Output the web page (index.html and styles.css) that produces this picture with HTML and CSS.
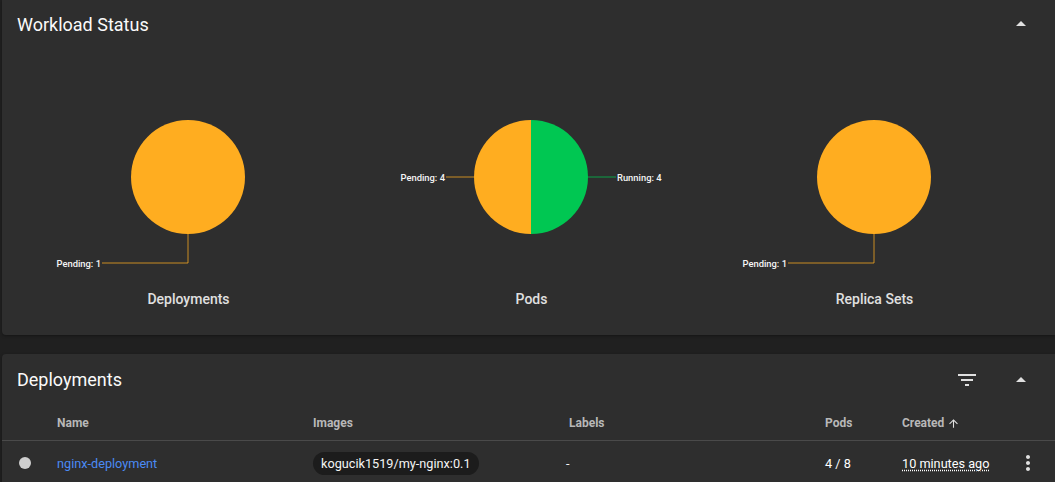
FILE: index.html
```html
<!DOCTYPE html>
<html>
<head>
<meta charset="utf-8">
<link rel="stylesheet" href="styles.css">
</head>
<body>
<section class="card card-top">
  <header class="card-head">
    <h2 class="card-title">Workload Status</h2>
    <div class="head-actions">
      <svg class="icon" viewBox="0 0 24 24"><path d="M7 14l5-5 5 5z" fill="#e0e0e0"/></svg>
    </div>
  </header>
  <div class="charts">
    <div class="chart">
      <svg class="pie" viewBox="0 0 343 200" width="343" height="200">
        <circle cx="171" cy="100" r="57" fill="#ffad20"/>
        <polyline points="171,157 171,186 85,186" fill="none" stroke="#ffad20" stroke-opacity="0.75" stroke-width="1"/>
        <text x="84" y="189.5" text-anchor="end" class="pie-label">Pending: 1</text>
      </svg>
      <div class="chart-name">Deployments</div>
    </div>
    <div class="chart">
      <svg class="pie" viewBox="0 0 343 200" width="343" height="200">
        <path d="M171 43 A57 57 0 0 0 171 157 Z" fill="#ffad20"/>
        <path d="M171 43 A57 57 0 0 1 171 157 Z" fill="#00c752"/>
        <line x1="114" y1="100" x2="86" y2="100" stroke="#ffad20" stroke-opacity="0.75"/>
        <line x1="228" y1="100" x2="256" y2="100" stroke="#00c752" stroke-opacity="0.75"/>
        <text x="85" y="103.5" text-anchor="end" class="pie-label">Pending: 4</text>
        <text x="257" y="103.5" text-anchor="start" class="pie-label">Running: 4</text>
      </svg>
      <div class="chart-name">Pods</div>
    </div>
    <div class="chart">
      <svg class="pie" viewBox="0 0 343 200" width="343" height="200">
        <circle cx="171" cy="100" r="57" fill="#ffad20"/>
        <polyline points="171,157 171,186 85,186" fill="none" stroke="#ffad20" stroke-opacity="0.75" stroke-width="1"/>
        <text x="84" y="189.5" text-anchor="end" class="pie-label">Pending: 1</text>
      </svg>
      <div class="chart-name">Replica Sets</div>
    </div>
  </div>
</section>

<section class="card card-bottom">
  <header class="card-head card-head-lg">
    <h2 class="card-title">Deployments</h2>
    <div class="head-actions">
      <svg class="icon filter" viewBox="0 0 24 24"><path d="M10 18h4v-2h-4v2zM3 6v2h18V6H3zm3 7h12v-2H6v2z" fill="#e0e0e0"/></svg>
      <svg class="icon" viewBox="0 0 24 24"><path d="M7 14l5-5 5 5z" fill="#e0e0e0"/></svg>
    </div>
  </header>
  <div class="table">
    <div class="row head-row">
      <div></div>
      <div>Name</div>
      <div>Images</div>
      <div>Labels</div>
      <div>Pods</div>
      <div class="sorted">Created <svg class="sort" viewBox="0 0 24 24"><path d="M4 12l1.41 1.41L11 7.83V20h2V7.83l5.58 5.59L20 12l-8-8-8 8z" fill="#e0e0e0"/></svg></div>
      <div></div>
    </div>
    <div class="row body-row">
      <div class="status"><span class="dot"></span></div>
      <div><a class="link" href="#">nginx-deployment</a></div>
      <div><span class="chip">kogucik1519/my-nginx:0.1</span></div>
      <div class="dash">-</div>
      <div class="strong">4 / 8</div>
      <div class="strong"><span class="dotted">10 minutes ago</span></div>
      <div class="menu"><svg class="icon" viewBox="0 0 24 24"><path d="M12 8c1.1 0 2-.9 2-2s-.9-2-2-2-2 .9-2 2 .9 2 2 2zm0 2c-1.1 0-2 .9-2 2s.9 2 2 2 2-.9 2-2-.9-2-2-2zm0 6c-1.1 0-2 .9-2 2s.9 2 2 2 2-.9 2-2-.9-2-2-2z" fill="#e0e0e0"/></svg></div>
    </div>
  </div>
</section>
</body>
</html>
```

FILE: styles.css
```css
html, body {
  margin: 0;
  padding: 0;
}
body {
  background: #202020;
  font-family: Roboto, "Liberation Sans", sans-serif;
  color: #fafafa;
  width: 1055px;
  height: 482px;
  overflow: hidden;
}
.card {
  background: #2e2e2e;
  margin: 0 0 0 2px;
  width: 1053px;
  box-shadow: 0 1px 3px rgba(0,0,0,0.35);
}
.card-top {
  height: 335px;
  border-radius: 0 0 0 4px;
}
.card-bottom {
  margin-top: 19px;
  height: 140px;
  border-radius: 4px 0 0 0;
}
.card-head {
  height: 48px;
  display: flex;
  align-items: center;
  justify-content: space-between;
  padding: 0 22px 0 15px;
}
.card-head-lg {
  height: 51px;
}
.card-title {
  margin: 0;
  font-size: 18px;
  font-weight: 400;
  color: #fafafa;
}
.head-actions {
  display: flex;
  align-items: center;
  gap: 30px;
}
.icon {
  width: 24px;
  height: 24px;
  display: block;
}
.charts {
  display: flex;
  padding: 29px 0 0 15px;
}
.chart {
  width: 343px;
  display: flex;
  flex-direction: column;
  align-items: center;
}
.pie {
  display: block;
}
.pie-label {
  font-family: Roboto, "Liberation Sans", sans-serif;
  font-size: 9.4px;
  font-weight: 500;
  fill: #f5f5f5;
}
.chart-name {
  margin-top: 14px;
  font-size: 14px;
  font-weight: 500;
  color: #e0e0e0;
  text-align: center;
}
.table {
  display: flex;
  flex-direction: column;
}
.row {
  display: grid;
  grid-template-columns: 55px 256px 256px 256px 77px 1fr 39px;
  align-items: center;
}
.head-row {
  height: 36px;
  padding-top: 1px;
  box-sizing: border-box;
  border-bottom: 1px solid #4a4a4a;
  font-size: 12px;
  font-weight: 700;
  color: #b8b8b8;
}
.sorted {
  display: flex;
  align-items: center;
  gap: 3px;
}
.sort {
  width: 13px;
  height: 13px;
}
.body-row {
  height: 44px;
  font-size: 12.7px;
  color: #f5f5f5;
}
.status {
  display: flex;
  justify-content: center;
  padding-right: 10px;
}
.dot {
  width: 12px;
  height: 12px;
  border-radius: 50%;
  background: #cfcfcf;
  display: block;
}
.link {
  color: #4b8bf5;
  text-decoration: none;
}
.chip {
  display: inline-block;
  background: #1c1c1c;
  border-radius: 12px;
  padding: 4px 8px;
  color: #f5f5f5;
}
.dash {
  margin-left: -3px;
}
.strong {
  font-weight: 400;
  color: #ffffff;
}
.dotted {
  text-decoration: underline dotted;
  text-underline-offset: 2px;
}
.menu {
  display: flex;
  justify-content: flex-start;
}
```
